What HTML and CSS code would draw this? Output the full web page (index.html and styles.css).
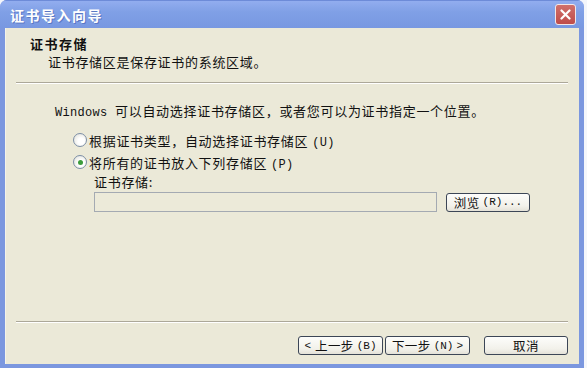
FILE: index.html
```html
<!DOCTYPE html>
<html lang="zh-CN">
<head>
  <meta charset="UTF-8" />
  <title>证书导入向导</title>
  <link rel="stylesheet" href="styles.css">
</head>
<body>
  <div class="window">
    <div class="titlebar">
      <span class="title">证书导入向导</span>
      <button class="close" title="关闭">
        <svg width="11" height="11" viewBox="0 0 11 11">
          <path d="M1.5 1.5 L9.5 9.5 M9.5 1.5 L1.5 9.5" stroke="#fff" stroke-width="2.2" stroke-linecap="round"/>
        </svg>
      </button>
    </div>

    <div class="client">
      <div class="header">
        <div class="header-title">证书存储</div>
        <div class="header-sub">证书存储区是保存证书的系统区域。</div>
      </div>
      <div class="separator"></div>

      <div class="content">
        <p class="intro"><span class="lat">Windows </span>可以自动选择证书存储区，或者您可以为证书指定一个位置。</p>

        <label class="option">
          <span class="radio"></span>
          <span>根据证书类型，自动选择证书存储区<span class="lat key">(U)</span></span>
        </label>
        <label class="option">
          <span class="radio checked"></span>
          <span>将所有的证书放入下列存储区<span class="lat key">(P)</span></span>
        </label>

        <div class="store">
          <div class="store-label">证书存储:</div>
          <div class="store-row">
            <div class="store-input"></div>
            <button class="btn browse">浏览<span class="lat key">(R)...</span></button>
          </div>
        </div>
      </div>

      <div class="footer">
        <div class="separator"></div>
        <div class="footer-buttons">
          <button class="btn nav"><span class="lat arrow">&lt;</span>上一步<span class="lat key">(B)</span></button>
          <button class="btn nav">下一步<span class="lat key">(N)</span><span class="lat key">&gt;</span></button>
          <button class="btn cancel">取消</button>
        </div>
      </div>
    </div>
  </div>
</body>
</html>
```

FILE: styles.css
```css
* {
  box-sizing: border-box;
  font-family: "Noto Sans CJK SC", "Liberation Sans", sans-serif;
}
body {
  margin: 0;
  background: #f4f6fb;
}
.window {
  width: 584px;
  height: 368px;
  display: flex;
  flex-direction: column;
  background: #7b97df;
  border-radius: 7px 7px 0 0;
  overflow: hidden;
}
.titlebar {
  height: 28px;
  display: flex;
  align-items: center;
  justify-content: space-between;
  padding: 0 8px 0 10px;
  background: linear-gradient(#92adef, #80a0e6 40%, #7898e1);
  border-top: 1px solid #6d8bd8;
}
.title {
  color: #fff;
  font-size: 14px;
  font-weight: bold;
  letter-spacing: 1.5px;
  text-shadow: 1px 1px 0 #5a78c4;
}
.close {
  width: 21px;
  height: 21px;
  padding: 0;
  display: flex;
  align-items: center;
  justify-content: center;
  background: linear-gradient(#d0706b, #bf4c4a);
  border: 1px solid #f2e6e6;
  border-radius: 3px;
}
.client {
  flex: 1;
  display: flex;
  flex-direction: column;
  margin: 0 5px 4px 5px;
  background: #ebe9d8;
  border-left: 1px solid #f4f3ea;
  color: #111;
  font-size: 13px;
  letter-spacing: 0.7px;
}
.lat {
  font-family: "Liberation Mono", monospace;
  font-size: 12px;
  letter-spacing: 0.3px;
}
.key {
  margin-left: 4px;
}
.header {
  height: 54px;
  padding: 8px 0 0 24px;
}
.header-title {
  font-weight: bold;
  letter-spacing: 1.5px;
  line-height: 16px;
}
.header-sub {
  margin: 2px 0 0 18px;
  line-height: 16px;
}
.separator {
  height: 2px;
  margin: 0 11px 0 10px;
  border-top: 1px solid #aca899;
  border-bottom: 1px solid #fff;
}
.content {
  padding: 19px 0 0 49px;
}
.intro {
  margin: 0;
  line-height: 16px;
}
.option {
  height: 22px;
  display: flex;
  align-items: center;
  gap: 2px;
  margin-left: 18px;
}
.option:first-of-type {
  margin-top: 8px;
}
.radio {
  width: 14px;
  height: 14px;
  border-radius: 50%;
  border: 1px solid #7c8ea6;
  background: radial-gradient(circle at 60% 60%, #fff 30%, #dcdcd4);
  display: flex;
  align-items: center;
  justify-content: center;
}
.radio.checked::after {
  content: "";
  width: 5px;
  height: 5px;
  border-radius: 50%;
  background: #3c9c3c;
}
.store {
  margin: 1px 0 0 39px;
}
.store-label {
  line-height: 16px;
}
.store-row {
  display: flex;
  align-items: center;
  gap: 9px;
  margin-top: 2px;
}
.store-input {
  width: 343px;
  height: 20px;
  background: #ecead9;
  border: 1px solid #a4aab2;
}
.btn {
  height: 19px;
  padding: 0;
  font-size: 12.5px;
  letter-spacing: 0.4px;
  color: #111;
  background: linear-gradient(#fdfdfb, #f2f1ea 70%, #e4e2d8);
  border: 1px solid #3c4656;
  border-radius: 3px;
  display: flex;
  align-items: center;
  justify-content: center;
}
.btn .lat {
  font-size: 11px;
  letter-spacing: 0;
}
.btn .key {
  margin-left: 3px;
}
.btn .arrow {
  margin-right: 4px;
}
.browse {
  width: 84px;
}
.footer {
  margin-top: auto;
  padding-bottom: 9px;
}
.footer-buttons {
  display: flex;
  justify-content: flex-end;
  padding: 13px 11px 0 0;
}
.nav {
  width: 85px;
  margin-left: 2px;
}
.cancel {
  width: 84px;
  margin-left: 14px;
}
```
